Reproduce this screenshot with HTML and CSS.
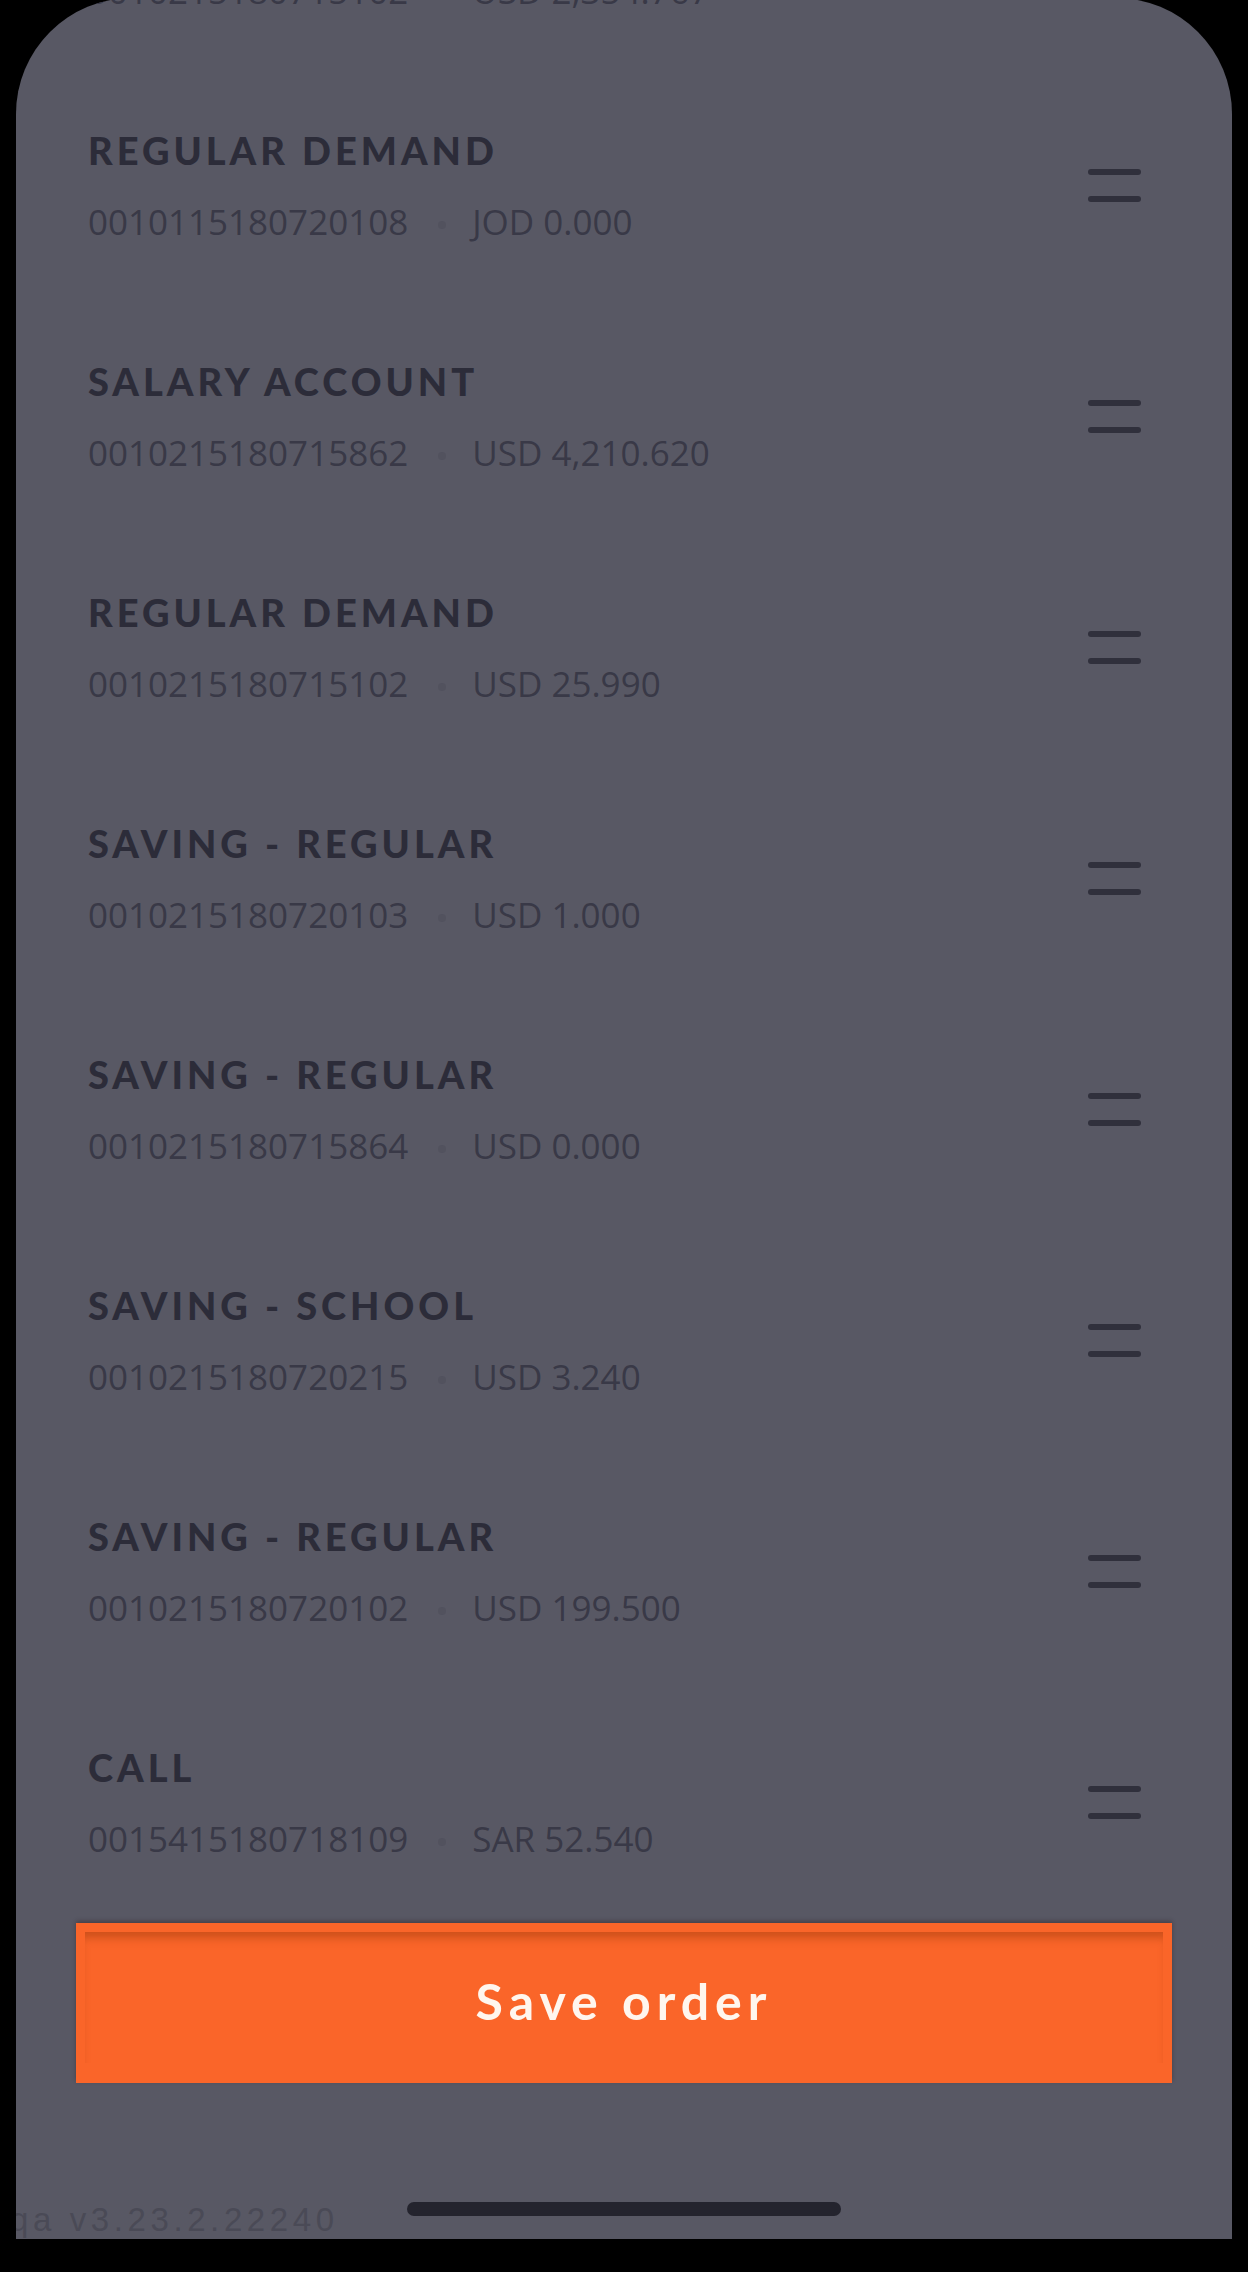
FILE: index.html
```html
<!DOCTYPE html>
<html lang="en">
<head>
<meta charset="utf-8">
<title>Reorder accounts</title>
<link rel="stylesheet" href="styles.css">
</head>
<body>
<div class="screen">
  <div class="panel">
    <ul class="accounts">
      <li class="account">
        <div class="info">
          <div class="title">REGULAR DEMAND</div>
          <div class="meta"><span class="num">0010215180715102</span><span class="dot"></span><span class="amount">USD 2,354.767</span></div>
        </div>
        <span class="handle"><i></i><i></i></span>
      </li>
      <li class="account">
        <div class="info">
          <div class="title">REGULAR DEMAND</div>
          <div class="meta"><span class="num">0010115180720108</span><span class="dot"></span><span class="amount">JOD 0.000</span></div>
        </div>
        <span class="handle"><i></i><i></i></span>
      </li>
      <li class="account">
        <div class="info">
          <div class="title">SALARY ACCOUNT</div>
          <div class="meta"><span class="num">0010215180715862</span><span class="dot"></span><span class="amount">USD 4,210.620</span></div>
        </div>
        <span class="handle"><i></i><i></i></span>
      </li>
      <li class="account">
        <div class="info">
          <div class="title">REGULAR DEMAND</div>
          <div class="meta"><span class="num">0010215180715102</span><span class="dot"></span><span class="amount">USD 25.990</span></div>
        </div>
        <span class="handle"><i></i><i></i></span>
      </li>
      <li class="account">
        <div class="info">
          <div class="title">SAVING - REGULAR</div>
          <div class="meta"><span class="num">0010215180720103</span><span class="dot"></span><span class="amount">USD 1.000</span></div>
        </div>
        <span class="handle"><i></i><i></i></span>
      </li>
      <li class="account">
        <div class="info">
          <div class="title">SAVING - REGULAR</div>
          <div class="meta"><span class="num">0010215180715864</span><span class="dot"></span><span class="amount">USD 0.000</span></div>
        </div>
        <span class="handle"><i></i><i></i></span>
      </li>
      <li class="account">
        <div class="info">
          <div class="title">SAVING - SCHOOL</div>
          <div class="meta"><span class="num">0010215180720215</span><span class="dot"></span><span class="amount">USD 3.240</span></div>
        </div>
        <span class="handle"><i></i><i></i></span>
      </li>
      <li class="account">
        <div class="info">
          <div class="title">SAVING - REGULAR</div>
          <div class="meta"><span class="num">0010215180720102</span><span class="dot"></span><span class="amount">USD 199.500</span></div>
        </div>
        <span class="handle"><i></i><i></i></span>
      </li>
      <li class="account">
        <div class="info">
          <div class="title">CALL</div>
          <div class="meta"><span class="num">0015415180718109</span><span class="dot"></span><span class="amount">SAR 52.540</span></div>
        </div>
        <span class="handle"><i></i><i></i></span>
      </li>
    </ul>
    <button class="save" type="button">Save order</button>
    <div class="version">qa v3.23.2.22240</div>
    <div class="home-indicator"></div>
  </div>
</div>
</body>
</html>
```

FILE: styles.css
```css
* { box-sizing: border-box; }

html, body {
  margin: 0;
  padding: 0;
  background: #000;
}

body {
  width: 1248px;
  height: 2272px;
  overflow: hidden;
  font-family: "Lato", "Liberation Sans", sans-serif;
}

.screen {
  height: 2272px;
  padding: 0 16px;
}

.panel {
  position: relative;
  margin-top: -2px;
  height: 2241px;
  background: #585864;
  border-radius: 116px 116px 0 0;
  overflow: hidden;
}

.accounts {
  list-style: none;
  margin: -159px 0 0;
  padding: 0;
}

.account {
  display: flex;
  align-items: center;
  height: 231px;
  padding: 0 91px 0 72px;
}

.info {
  flex: 1;
  display: flex;
  flex-direction: column;
  gap: 26px;
}

.title {
  font-family: "Lato", "Liberation Sans", sans-serif;
  font-weight: 900;
  font-size: 38px;
  line-height: 46px;
  letter-spacing: 4px;
  color: #2c2c39;
}

.meta {
  display: flex;
  align-items: center;
  font-family: "Open Sans", "Liberation Sans", sans-serif;
  font-weight: 400;
  font-size: 35px;
  line-height: 46px;
  color: #393947;
}

.dot {
  width: 8px;
  height: 8px;
  border-radius: 50%;
  background: #52525e;
  margin: 6px 26px 0 30px;
}

.handle {
  display: flex;
  flex-direction: column;
  gap: 21px;
  width: 53px;
}

.handle i {
  display: block;
  height: 6px;
  border-radius: 3px;
  background: #30303c;
}

.save {
  position: relative;
  display: flex;
  align-items: center;
  justify-content: center;
  width: calc(100% - 120px);
  height: 160px;
  margin: 5px 60px 0;
  padding: 0 0 4px;
  border: 0;
  border-radius: 0;
  background: #fa6529;
  color: #fff6ee;
  font-family: "Lato", "Liberation Sans", sans-serif;
  font-weight: 700;
  font-size: 50px;
  letter-spacing: 6px;
  box-shadow: 0 -2px 4px rgba(40, 20, 20, 0.35);
}

.save::before {
  content: "";
  position: absolute;
  inset: 9px 9px 20px 9px;
  box-shadow: inset 0 10px 8px -4px rgba(150, 55, 10, 0.45);
  pointer-events: none;
}

.version {
  position: absolute;
  left: -6px;
  bottom: 0;
  font-family: "Liberation Sans", sans-serif;
  font-size: 33px;
  line-height: 38px;
  letter-spacing: 4.6px;
  color: #4a4a56;
  white-space: nowrap;
}

.home-indicator {
  position: absolute;
  left: 391px;
  top: 2204px;
  width: 434px;
  height: 14px;
  border-radius: 7px;
  background: #24242e;
}
```
